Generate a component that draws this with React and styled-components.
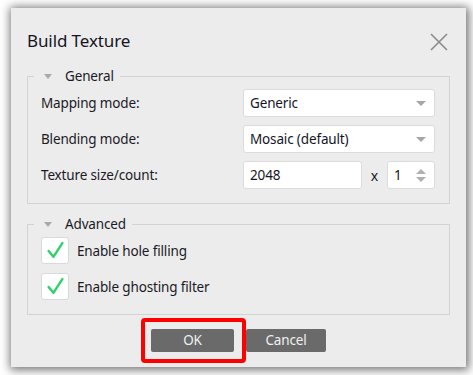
import React from "react";
import styled, { createGlobalStyle } from "styled-components";

const Global = createGlobalStyle`
  html, body { margin: 0; padding: 0; background: #ffffff; }
  body { font-family: "Noto Sans", "Open Sans", sans-serif; color: #1c1c24; }
`;

const Stage = styled.div`
  width: 473px;
  height: 375px;
  padding: 8px 7px 8px 11px;
  box-sizing: border-box;
`;

const Dialog = styled.div`
  width: 455px;
  height: 359px;
  box-sizing: border-box;
  background: #ececec;
  box-shadow: 1px 1px 9px 2px rgba(0, 0, 0, 0.55);
  padding: 0 16px 15px 16px;
  display: flex;
  flex-direction: column;
`;

const TitleBar = styled.div`
  display: flex;
  align-items: center;
  justify-content: space-between;
  height: 59px;
  padding: 0 1px 0 0;
`;

const Title = styled.div`
  font-size: 17px;
  letter-spacing: -0.1px;
  margin-top: 6px;
  color: #15151f;
`;

const CloseBtn = styled.div`
  width: 20px;
  height: 20px;
  margin-top: 8px;
  display: flex;
  align-items: center;
  justify-content: center;
`;

const Group = styled.fieldset`
  margin: 0;
  padding: 4px 14px 14px 13px;
  border: 1px solid #d3d3d3;
  border-radius: 0;
  min-width: 0;
  display: flex;
  flex-direction: column;
  gap: ${(p) => p.$gap}px;
  & + & { margin-top: 11px; }
`;

const Legend = styled.legend`
  margin-left: -7px;
  padding: 0 6px 0 10px;
  display: flex;
  align-items: center;
  gap: 13px;
  font-size: 13.5px;
  letter-spacing: -0.15px;
  line-height: 18px;
  color: #1a1a26;
`;

const Tri = styled.span`
  width: 0;
  height: 0;
  border-left: 4.5px solid transparent;
  border-right: 4.5px solid transparent;
  border-top: 5px solid #a9a9a9;
`;

const Row = styled.div`
  display: grid;
  grid-template-columns: 1fr 192px;
  align-items: center;
  height: 28px;
`;

const Label = styled.span`
  font-size: 13.5px;
  letter-spacing: -0.15px;
  color: #1a1a26;
`;

const Field = styled.div`
  height: 28px;
  box-sizing: border-box;
  background: #ffffff;
  border: 1px solid #dcdcdc;
  border-radius: 3px;
  display: flex;
  align-items: center;
  justify-content: space-between;
  padding: 0 8px 0 6px;
  font-size: 13.5px;
  letter-spacing: -0.15px;
  color: #15151f;
  width: ${(p) => (p.$w ? `${p.$w}px` : "auto")};
`;

const ComboArrow = styled.span`
  width: 0;
  height: 0;
  border-left: 5px solid transparent;
  border-right: 5px solid transparent;
  border-top: 5px solid #a6a6a6;
`;

const SizeCell = styled.div`
  display: flex;
  align-items: center;
  justify-content: space-between;
`;

const Times = styled.span`
  font-size: 14px;
  color: #1a1a26;
  width: 25px;
  text-align: center;
`;

const Spin = styled.div`
  display: flex;
  flex-direction: column;
  gap: 3px;
  align-items: center;
`;

const SpinUp = styled.span`
  width: 0;
  height: 0;
  border-left: 5px solid transparent;
  border-right: 5px solid transparent;
  border-bottom: 5px solid #b0b0b0;
`;

const SpinDown = styled.span`
  width: 0;
  height: 0;
  border-left: 5px solid transparent;
  border-right: 5px solid transparent;
  border-top: 5px solid #b0b0b0;
`;

const CheckRow = styled.label`
  display: flex;
  align-items: center;
  gap: 8px;
  height: 27px;
  font-size: 13.5px;
  letter-spacing: -0.15px;
  color: #1a1a26;
`;

const CheckBox = styled.span`
  width: 28px;
  height: 27px;
  box-sizing: border-box;
  background: #ffffff;
  border: 1px solid #dadada;
  border-radius: 3px;
  display: flex;
  align-items: center;
  justify-content: center;
`;

const Buttons = styled.div`
  margin-top: auto;
  display: flex;
  justify-content: center;
  gap: 12px;
`;

const Button = styled.button`
  position: relative;
  width: ${(p) => p.$w}px;
  height: 23px;
  border: none;
  border-radius: 2px;
  background: #6a6a6a;
  color: #f0f0f0;
  font-family: "Noto Sans", "Open Sans", sans-serif;
  font-size: 13.5px;
  letter-spacing: -0.15px;
  padding: 0;
  line-height: 23px;
`;

const Highlight = styled.span`
  position: absolute;
  left: -10px;
  right: -12px;
  top: -11px;
  bottom: -11px;
  border: 4px solid #ff0000;
  border-radius: 4px;
  pointer-events: none;
`;

const Check = () => (
  <svg width="19" height="19" viewBox="0 0 18 18">
    <path d="M2.5 9.5 L7 15 L15.5 2" fill="none" stroke="#2ed16b" strokeWidth="2.3" strokeLinecap="round" strokeLinejoin="round" />
  </svg>
);

export default function App() {
  return (
    <>
      <Global />
      <Stage>
        <Dialog>
          <TitleBar>
            <Title>Build Texture</Title>
            <CloseBtn>
              <svg width="18" height="18" viewBox="0 0 18 18">
                <path d="M1 1 L17 17 M17 1 L1 17" stroke="#8a8a8a" strokeWidth="1.6" fill="none" />
              </svg>
            </CloseBtn>
          </TitleBar>

          <Group $gap={8}>
            <Legend>
              <Tri />
              General
            </Legend>
            <Row>
              <Label>Mapping mode:</Label>
              <Field>
                Generic
                <ComboArrow />
              </Field>
            </Row>
            <Row>
              <Label>Blending mode:</Label>
              <Field>
                Mosaic (default)
                <ComboArrow />
              </Field>
            </Row>
            <Row>
              <Label>Texture size/count:</Label>
              <SizeCell>
                <Field $w={119}>2048</Field>
                <Times>x</Times>
                <Field $w={48}>
                  1
                  <Spin>
                    <SpinUp />
                    <SpinDown />
                  </Spin>
                </Field>
              </SizeCell>
            </Row>
          </Group>

          <Group $gap={9}>
            <Legend>
              <Tri />
              Advanced
            </Legend>
            <CheckRow>
              <CheckBox>
                <Check />
              </CheckBox>
              Enable hole filling
            </CheckRow>
            <CheckRow>
              <CheckBox>
                <Check />
              </CheckBox>
              Enable ghosting filter
            </CheckRow>
          </Group>

          <Buttons>
            <Button $w={83}>
              OK
              <Highlight />
            </Button>
            <Button $w={80}>Cancel</Button>
          </Buttons>
        </Dialog>
      </Stage>
    </>
  );
}
